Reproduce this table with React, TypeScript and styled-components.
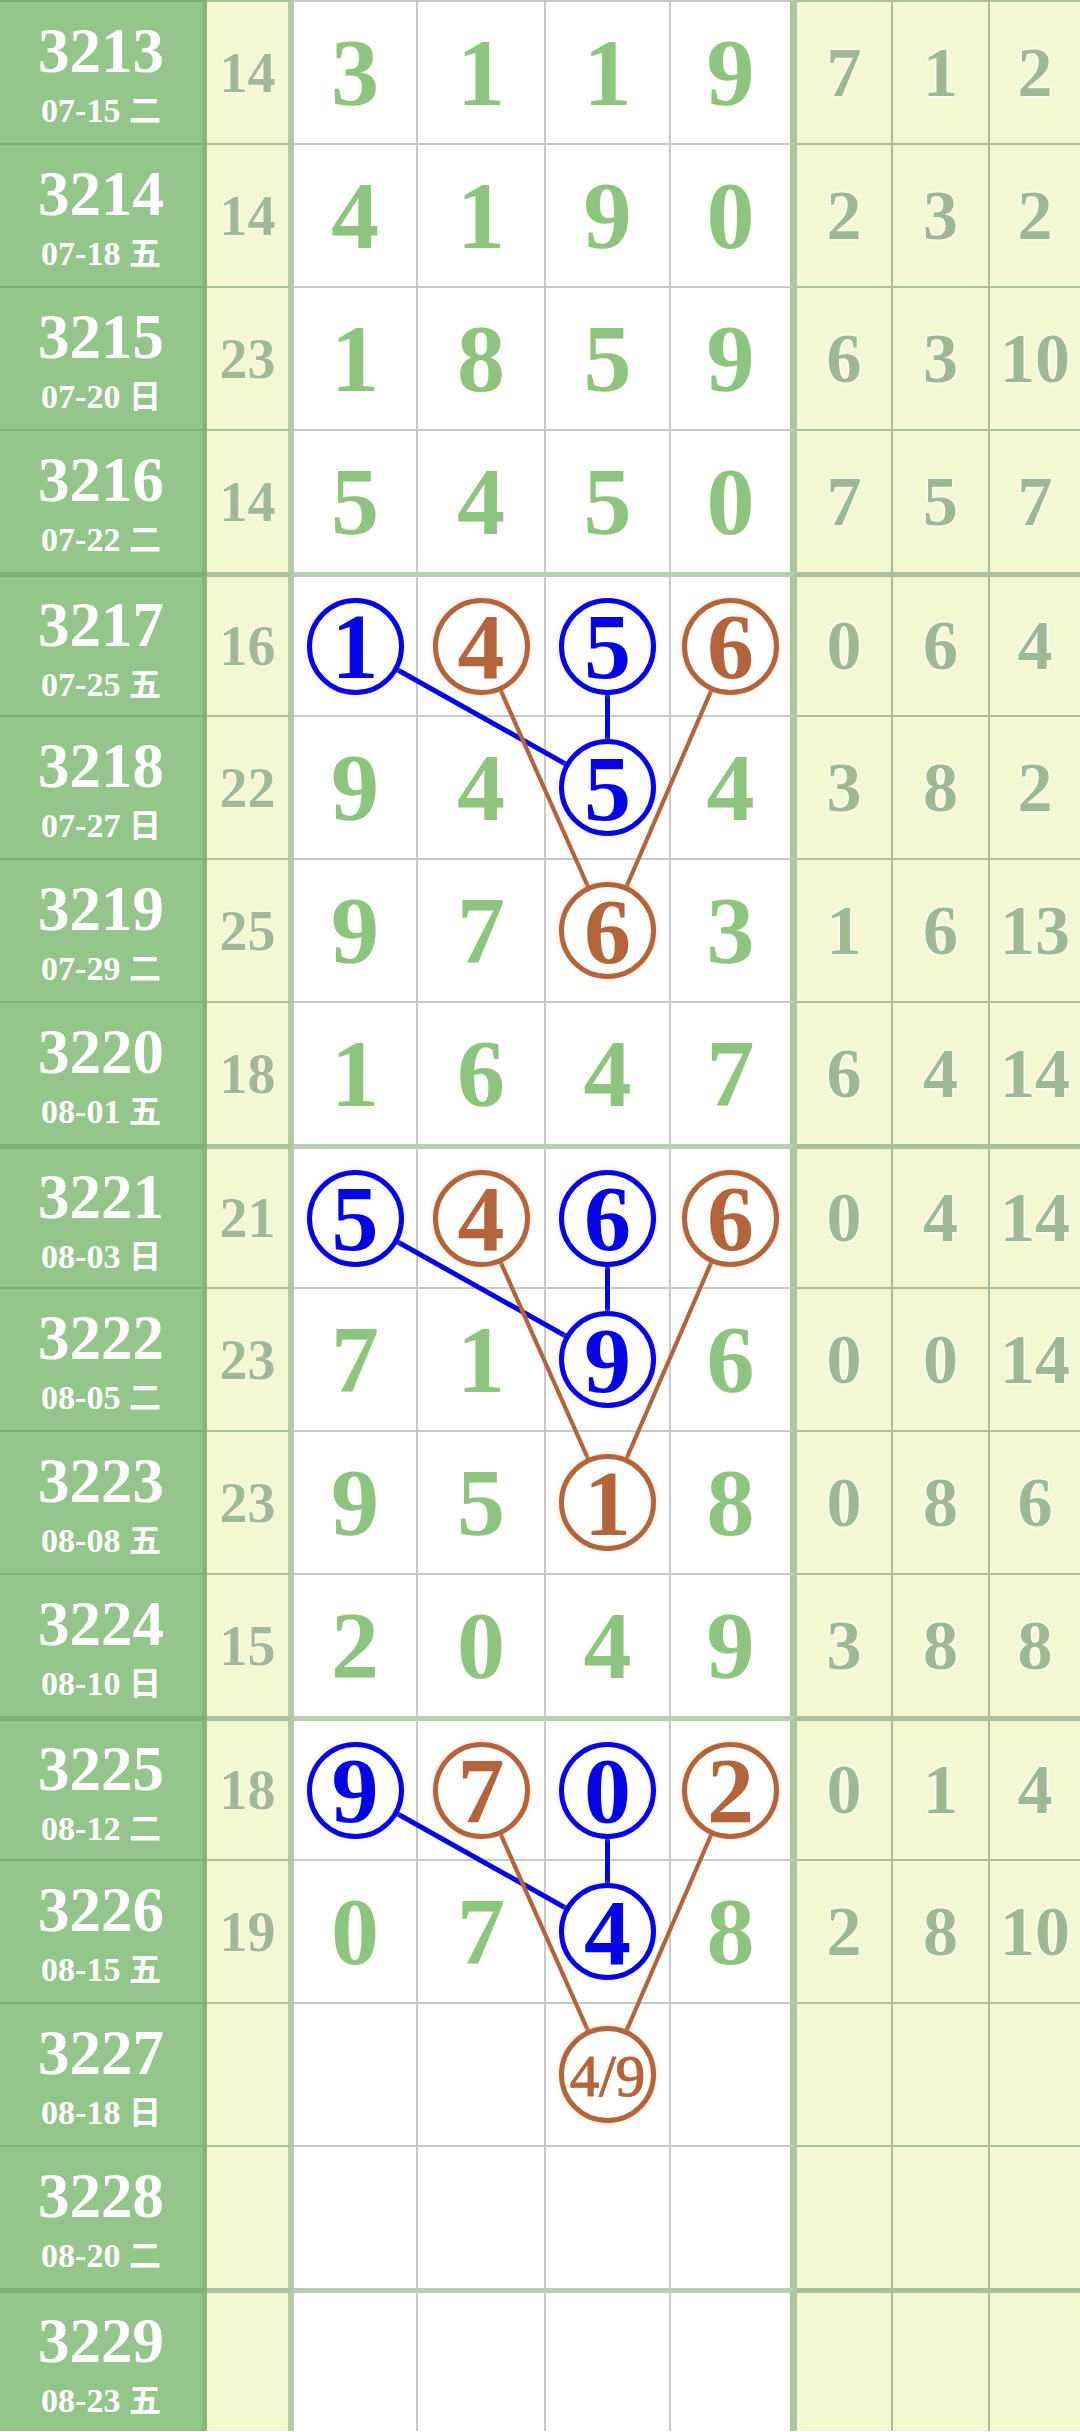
import React from 'react';
import styled, { createGlobalStyle } from 'styled-components';

const GlobalStyle = createGlobalStyle`
  html, body { margin: 0; padding: 0; background: #ffffff; }
  body { font-family: "Liberation Serif", "Noto Sans CJK SC", serif; }
  *, *::before, *::after { box-sizing: border-box; }
`;

const ROW_H = 143;
const THIN = 2;
const THICK = 5;
const COLS = [
  { w: 207, b: 5 },
  { w: 87, b: 6 },
  { w: 124, b: 2 },
  { w: 128, b: 2 },
  { w: 125, b: 2 },
  { w: 126, b: 7 },
  { w: 96, b: 2 },
  { w: 97, b: 2 },
  { w: 90, b: 0 },
];
const GROUP_STARTS = [4, 8, 12, 16];

type Tone = 'blue' | 'brown';
type Pick = { v: string; tone: Tone; small?: boolean };
type D = number | Pick | null;
interface RowData {
  no: string;
  date: string;
  day: string;
  sum: number | null;
  d: D[];
  m: (number | null)[];
}

const B = (v: number): Pick => ({ v: String(v), tone: 'blue' });
const R = (v: number | string, small = false): Pick => ({ v: String(v), tone: 'brown', small });
const E = [null, null, null, null];
const EM = [null, null, null];

const ROWS: RowData[] = [
  { no: '3213', date: '07-15', day: '二', sum: 14, d: [3, 1, 1, 9], m: [7, 1, 2] },
  { no: '3214', date: '07-18', day: '五', sum: 14, d: [4, 1, 9, 0], m: [2, 3, 2] },
  { no: '3215', date: '07-20', day: '日', sum: 23, d: [1, 8, 5, 9], m: [6, 3, 10] },
  { no: '3216', date: '07-22', day: '二', sum: 14, d: [5, 4, 5, 0], m: [7, 5, 7] },
  { no: '3217', date: '07-25', day: '五', sum: 16, d: [B(1), R(4), B(5), R(6)], m: [0, 6, 4] },
  { no: '3218', date: '07-27', day: '日', sum: 22, d: [9, 4, B(5), 4], m: [3, 8, 2] },
  { no: '3219', date: '07-29', day: '二', sum: 25, d: [9, 7, R(6), 3], m: [1, 6, 13] },
  { no: '3220', date: '08-01', day: '五', sum: 18, d: [1, 6, 4, 7], m: [6, 4, 14] },
  { no: '3221', date: '08-03', day: '日', sum: 21, d: [B(5), R(4), B(6), R(6)], m: [0, 4, 14] },
  { no: '3222', date: '08-05', day: '二', sum: 23, d: [7, 1, B(9), 6], m: [0, 0, 14] },
  { no: '3223', date: '08-08', day: '五', sum: 23, d: [9, 5, R(1), 8], m: [0, 8, 6] },
  { no: '3224', date: '08-10', day: '日', sum: 15, d: [2, 0, 4, 9], m: [3, 8, 8] },
  { no: '3225', date: '08-12', day: '二', sum: 18, d: [B(9), R(7), B(0), R(2)], m: [0, 1, 4] },
  { no: '3226', date: '08-15', day: '五', sum: 19, d: [0, 7, B(4), 8], m: [2, 8, 10] },
  { no: '3227', date: '08-18', day: '日', sum: null, d: [null, null, R('4/9', true), null], m: EM },
  { no: '3228', date: '08-20', day: '二', sum: null, d: E, m: EM },
  { no: '3229', date: '08-23', day: '五', sum: null, d: E, m: EM },
];

const COLOR = { blue: '#0505e4', brown: '#b3643b' };

const Table = styled.div`
  position: relative;
  width: 1080px;
`;

const Row = styled.div`
  display: grid;
  grid-template-columns: ${COLS.map((c) => `${c.w}px`).join(' ')};
  height: ${ROW_H}px;
`;

const BaseCell = styled.div<{ $top: number }>`
  display: flex;
  align-items: center;
  justify-content: center;
  border-top-style: solid;
  border-top-width: ${(p) => p.$top}px;
`;

const LabelCell = styled(BaseCell)`
  flex-direction: column;
  gap: 9px;
  background: #94c58b;
  border-top-color: #80b078;
  border-right: 5px solid #86b67e;
  color: #ffffff;
  font-weight: 700;
`;

const LabelNo = styled.div`
  font-size: 63px;
  line-height: 62px;
  height: 62px;
`;

const LabelDate = styled.div`
  font-size: 34px;
  line-height: 34px;
  height: 34px;
  white-space: nowrap;
`;

const DayChar = styled.span`
  font-family: "Noto Sans CJK SC", sans-serif;
  font-weight: 700;
  font-size: 32px;
`;

const SumCell = styled(BaseCell)`
  background: #f3f8d2;
  border-top-color: #abc09e;
  border-right: 6px solid #b5c9a8;
  color: #a2b996;
  font-weight: 700;
  font-size: 56px;
  line-height: 1;
  text-shadow: 0 0 2px #ffffff, 0 0 3px #ffffff;
`;

const DigitCell = styled(BaseCell)<{ $last: boolean }>`
  background: #ffffff;
  border-top-color: ${(p) => (p.$top > THIN ? '#b9cdb2' : '#c9c9c9')};
  border-right: ${(p) => (p.$last ? '7px solid #aac89d' : '2px solid #c9c9c9')};
  color: #8dc47f;
  font-weight: 700;
  font-size: 96px;
  line-height: 1;
  text-shadow: 0 0 3px #fffbe6;
`;

const MissCell = styled(BaseCell)<{ $last: boolean }>`
  background: #f3f8d2;
  border-top-color: #abbf9d;
  border-right: ${(p) => (p.$last ? 'none' : '2px solid #aabb9d')};
  color: #9db991;
  font-weight: 700;
  font-size: 70px;
  line-height: 1;
  text-shadow: 0 0 2px #ffffff, 0 0 3px #ffffff, 0 0 4px #ffffff;
`;

const Circle = styled.div<{ $tone: Tone; $small: boolean }>`
  position: relative;
  z-index: 2;
  width: 97px;
  height: 97px;
  border-radius: 50%;
  border: 5px solid ${(p) => COLOR[p.$tone]};
  background: #ffffff;
  box-shadow: 0 0 5px rgba(240, 190, 150, 0.6);
  display: flex;
  align-items: center;
  justify-content: center;
  color: ${(p) => COLOR[p.$tone]};
  font-size: ${(p) => (p.$small ? '59px' : '94px')};
  font-weight: ${(p) => (p.$small ? 400 : 700)};
  -webkit-text-stroke: ${(p) => (p.$small ? `1.2px ${COLOR[p.$tone]}` : '0')};
  line-height: 1;
  text-shadow: none;
  padding-top: ${(p) => (p.$small ? '4px' : '0')};
`;

const Overlay = styled.svg`
  position: absolute;
  left: 0;
  top: 0;
  z-index: 1;
  pointer-events: none;
`;

const topOf = (i: number) => (GROUP_STARTS.includes(i) ? THICK : THIN);

const colLeft = (ci: number) => COLS.slice(0, ci).reduce((s, c) => s + c.w, 0);
const digitCenterX = (k: number) => {
  const ci = k + 2;
  return colLeft(ci) + (COLS[ci].w - COLS[ci].b) / 2;
};
const rowCenterY = (i: number) => {
  const t = topOf(i);
  return i * ROW_H + t + (ROW_H - t) / 2;
};

type Seg = { a: [number, number]; b: [number, number]; tone: Tone };
const SEGS: Seg[] = [4, 8, 12].flatMap((g) => [
  { a: [0, g], b: [2, g + 1], tone: 'blue' as Tone },
  { a: [2, g], b: [2, g + 1], tone: 'blue' as Tone },
  { a: [1, g], b: [2, g + 2], tone: 'brown' as Tone },
  { a: [3, g], b: [2, g + 2], tone: 'brown' as Tone },
]);

const renderDigit = (d: D) => {
  if (d === null) return null;
  if (typeof d === 'number') return d;
  return (
    <Circle $tone={d.tone} $small={!!d.small}>
      {d.v}
    </Circle>
  );
};

export default function App() {
  const total = ROWS.length * ROW_H;
  return (
    <>
      <GlobalStyle />
      <Table>
        {ROWS.map((r, i) => {
          const t = topOf(i);
          return (
            <Row key={r.no}>
              <LabelCell $top={t}>
                <LabelNo>{r.no}</LabelNo>
                <LabelDate>
                  {r.date} <DayChar>{r.day}</DayChar>
                </LabelDate>
              </LabelCell>
              <SumCell $top={t}>{r.sum ?? ''}</SumCell>
              {r.d.map((d, k) => (
                <DigitCell key={k} $top={t} $last={k === 3}>
                  {renderDigit(d)}
                </DigitCell>
              ))}
              {r.m.map((m, k) => (
                <MissCell key={k} $top={t} $last={k === 2}>
                  {m ?? ''}
                </MissCell>
              ))}
            </Row>
          );
        })}
        <Overlay width={1080} height={total} viewBox={`0 0 1080 ${total}`}>
          {SEGS.map((s, i) => (
            <line
              key={i}
              x1={digitCenterX(s.a[0])}
              y1={rowCenterY(s.a[1])}
              x2={digitCenterX(s.b[0])}
              y2={rowCenterY(s.b[1])}
              stroke={COLOR[s.tone]}
              strokeWidth={s.tone === 'blue' ? 5 : 4.2}
            />
          ))}
        </Overlay>
      </Table>
    </>
  );
}
